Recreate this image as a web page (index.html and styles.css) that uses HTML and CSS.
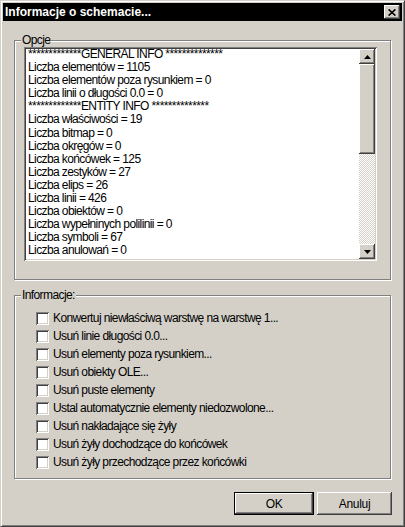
FILE: index.html
```html
<!DOCTYPE html>
<html lang="pl">
<head>
<meta charset="utf-8">
<title>Informacje o schemacie...</title>
<link rel="stylesheet" href="styles.css">
</head>
<body>
<div class="window">
  <div class="titlebar">
    <span class="title">Informacje o schemacie...</span>
    <span class="close"><svg width="8" height="7" viewBox="0 0 8 7"><path d="M0.6 0.4 L7.4 6.6 M7.4 0.4 L0.6 6.6" stroke="#000" stroke-width="1.6" fill="none"/></svg></span>
  </div>
  <div class="content">
    <div class="group group-opts">
      <span class="legend">Opcje</span>
      <div class="listbox">
        <div class="items">
          <div class="item">*************GENERAL INFO **************</div>
          <div class="item">Liczba elementów = 1105</div>
          <div class="item">Liczba elementów poza rysunkiem = 0</div>
          <div class="item">Liczba linii o długości 0.0 = 0</div>
          <div class="item">*************ENTITY INFO **************</div>
          <div class="item">Liczba właściwości = 19</div>
          <div class="item">Liczba bitmap = 0</div>
          <div class="item">Liczba okręgów = 0</div>
          <div class="item">Liczba końcówek = 125</div>
          <div class="item">Liczba zestyków = 27</div>
          <div class="item">Liczba elips = 26</div>
          <div class="item">Liczba linii = 426</div>
          <div class="item">Liczba obiektów = 0</div>
          <div class="item">Liczba wypełninych polilinii = 0</div>
          <div class="item">Liczba symboli = 67</div>
          <div class="item">Liczba anulowań = 0</div>
          <div class="item">Liczba tekstów = 299</div>
        </div>
        <div class="scrollbar">
          <div class="sb-btn"><svg width="7" height="4" viewBox="0 0 7 4"><polygon points="0,4 3.5,0 7,4" fill="#000"/></svg></div>
          <div class="sb-track"><div class="sb-thumb"></div></div>
          <div class="sb-btn"><svg width="7" height="4" viewBox="0 0 7 4"><polygon points="0,0 7,0 3.5,4" fill="#000"/></svg></div>
        </div>
      </div>
    </div>
    <div class="group group-info">
      <span class="legend">Informacje:</span>
      <div class="check"><span class="cb"></span><span class="label">Konwertuj niewłaściwą warstwę na warstwę 1...</span></div>
      <div class="check"><span class="cb"></span><span class="label">Usuń linie długości 0.0...</span></div>
      <div class="check"><span class="cb"></span><span class="label">Usuń elementy poza rysunkiem...</span></div>
      <div class="check"><span class="cb"></span><span class="label">Usuń obiekty OLE...</span></div>
      <div class="check"><span class="cb"></span><span class="label">Usuń puste elementy</span></div>
      <div class="check"><span class="cb"></span><span class="label">Ustal automatycznie elementy niedozwolone...</span></div>
      <div class="check"><span class="cb"></span><span class="label">Usuń nakładające się żyły</span></div>
      <div class="check"><span class="cb"></span><span class="label">Usuń żyły dochodzące do końcówek</span></div>
      <div class="check"><span class="cb"></span><span class="label">Usuń żyły przechodzące przez końcówki</span></div>
    </div>
    <div class="buttons">
      <button class="btn btn-ok">OK</button>
      <button class="btn btn-cancel">Anuluj</button>
    </div>
  </div>
</div>
</body>
</html>
```
FILE: styles.css
```css
html, body {
  margin: 0;
  padding: 0;
}
body {
  width: 405px;
  height: 527px;
  background: #d4d0c8;
  font-family: "Liberation Sans", Arial, sans-serif;
  font-size: 12px;
  letter-spacing: -0.6px;
  color: #000;
}
.window {
  box-sizing: border-box;
  width: 405px;
  height: 527px;
  border: 1px solid;
  border-color: #d4d0c8 #404040 #404040 #d4d0c8;
  box-shadow: inset 1px 1px 0 #fff, inset -1px -1px 0 #808080;
  padding: 2px;
  background: #d4d0c8;
  display: flex;
  flex-direction: column;
}
.titlebar {
  height: 18px;
  flex: none;
  background: #000;
  display: flex;
  align-items: center;
  justify-content: space-between;
  padding-left: 2px;
}
.title {
  color: #fff;
  font-weight: bold;
  letter-spacing: 0;
}
.close {
  width: 16px;
  height: 14px;
  margin-right: 2px;
  background: #d4d0c8;
  box-shadow: inset -1px -1px 0 #404040, inset 1px 1px 0 #fff, inset -2px -2px 0 #808080;
  display: flex;
  align-items: center;
  justify-content: center;
}
.close svg {
  margin-top: 0;
}
.content {
  padding: 0 10px 0 11px;
  display: flex;
  flex-direction: column;
}
.group {
  position: relative;
  box-sizing: border-box;
  width: 377px;
  border: 1px solid #808080;
  box-shadow: inset 1px 1px 0 #fff, 1px 1px 0 #fff;
}
.legend {
  position: absolute;
  top: -7px;
  left: 6px;
  padding: 0 1px;
  line-height: 13px;
  background: #d4d0c8;
}
.group-opts {
  margin-top: 19px;
  padding: 6px 0 18px 9px;
}
.listbox {
  box-sizing: border-box;
  width: 353px;
  height: 214px;
  padding: 2px;
  background: #fff;
  box-shadow: inset 1px 1px 0 #808080, inset -1px -1px 0 #fff, inset 2px 2px 0 #404040, inset -2px -2px 0 #d4d0c8;
  display: flex;
}
.items {
  flex: 1;
  min-width: 0;
  overflow: hidden;
  padding-left: 2px;
  margin-top: -1px;
  white-space: nowrap;
  line-height: 13.1px;
}
.scrollbar {
  width: 16px;
  flex: none;
  display: flex;
  flex-direction: column;
}
.sb-btn, .sb-thumb {
  background: #d4d0c8;
  box-shadow: inset -1px -1px 0 #404040, inset 1px 1px 0 #fff, inset -2px -2px 0 #808080;
}
.sb-btn {
  height: 15px;
  flex: none;
  display: flex;
  align-items: center;
  justify-content: center;
}
.sb-track {
  flex: 1;
  background: repeating-conic-gradient(#fff 0% 25%, #d4d0c8 0% 50%) 0 0 / 2px 2px;
}
.sb-thumb {
  height: 90px;
}
.group-info {
  margin-top: 15px;
  padding: 13px 0 7px 21px;
}
.check {
  display: flex;
  align-items: center;
  height: 18px;
}
.cb {
  width: 13px;
  height: 13px;
  flex: none;
  background: #fff;
  box-shadow: inset 1px 1px 0 #808080, inset -1px -1px 0 #fff, inset 2px 2px 0 #404040, inset -2px -2px 0 #d4d0c8;
}
.label {
  margin-left: 4px;
  white-space: nowrap;
}
.buttons {
  display: flex;
  justify-content: flex-end;
  gap: 3px;
  margin-top: 13px;
}
.btn {
  box-sizing: border-box;
  height: 23px;
  padding: 0;
  border: none;
  font: inherit;
  letter-spacing: -0.3px;
  color: #000;
  background: #d4d0c8;
  box-shadow: inset -1px -1px 0 #404040, inset 1px 1px 0 #fff, inset -2px -2px 0 #808080;
}
.btn-ok {
  width: 80px;
  border: 1px solid #000;
}
.btn-cancel {
  width: 75px;
}
```
